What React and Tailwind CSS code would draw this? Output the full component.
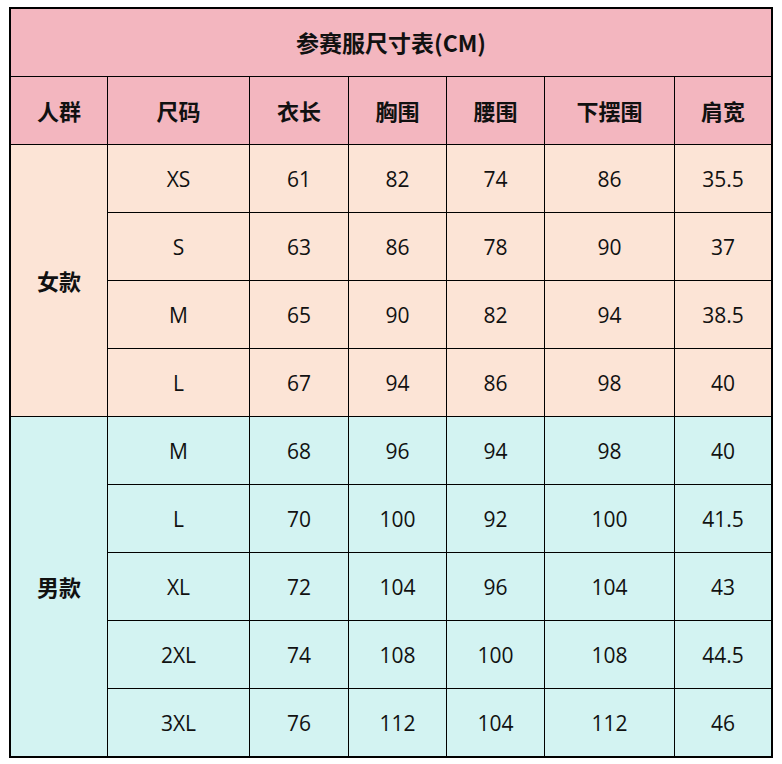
import React from "react";

const female = [
  ["XS", "61", "82", "74", "86", "35.5"],
  ["S", "63", "86", "78", "90", "37"],
  ["M", "65", "90", "82", "94", "38.5"],
  ["L", "67", "94", "86", "98", "40"],
];
const male = [
  ["M", "68", "96", "94", "98", "40"],
  ["L", "70", "100", "92", "100", "41.5"],
  ["XL", "72", "104", "96", "104", "43"],
  ["2XL", "74", "108", "100", "108", "44.5"],
  ["3XL", "76", "112", "104", "112", "46"],
];
const headers = ["人群", "尺码", "衣长", "胸围", "腰围", "下摆围", "肩宽"];

const headCls =
  "bg-[#F3B6BF] flex items-center justify-center text-[22px] font-bold font-['Noto_Sans_CJK_SC','Open_Sans',sans-serif]";

export default function App() {
  return (
    <div className="w-[782px] h-[764px] bg-white pt-[7px] pl-[9px]">
      <div className="w-[764px] border-2 border-black bg-black grid gap-px grid-cols-[96px_141px_98px_97px_97px_129px_96px] auto-rows-[67px] text-[#111] font-['Open_Sans','Noto_Sans_CJK_SC',sans-serif]">
        <div className="col-span-7 bg-[#F3B6BF] flex items-center justify-center text-[23px] font-bold font-['Noto_Sans_CJK_SC','Open_Sans',sans-serif]">
          参赛服尺寸表(CM)
        </div>
        {headers.map((h) => (
          <div key={h} className={headCls}>
            {h}
          </div>
        ))}
        <div className="row-span-4 bg-[#FCE4D6] flex items-center justify-center text-[22px] font-bold font-['Noto_Sans_CJK_SC','Open_Sans',sans-serif]">
          女款
        </div>
        {female.map((r, i) =>
          r.map((c, j) => (
            <div key={"f" + i + j} className="bg-[#FCE4D6] flex items-center justify-center pt-[3px] text-[21px]">
              {c}
            </div>
          ))
        )}
        <div className="row-span-5 bg-[#D3F3F2] flex items-center justify-center text-[22px] font-bold font-['Noto_Sans_CJK_SC','Open_Sans',sans-serif]">
          男款
        </div>
        {male.map((r, i) =>
          r.map((c, j) => (
            <div key={"m" + i + j} className="bg-[#D3F3F2] flex items-center justify-center pt-[3px] text-[21px]">
              {c}
            </div>
          ))
        )}
      </div>
    </div>
  );
}
